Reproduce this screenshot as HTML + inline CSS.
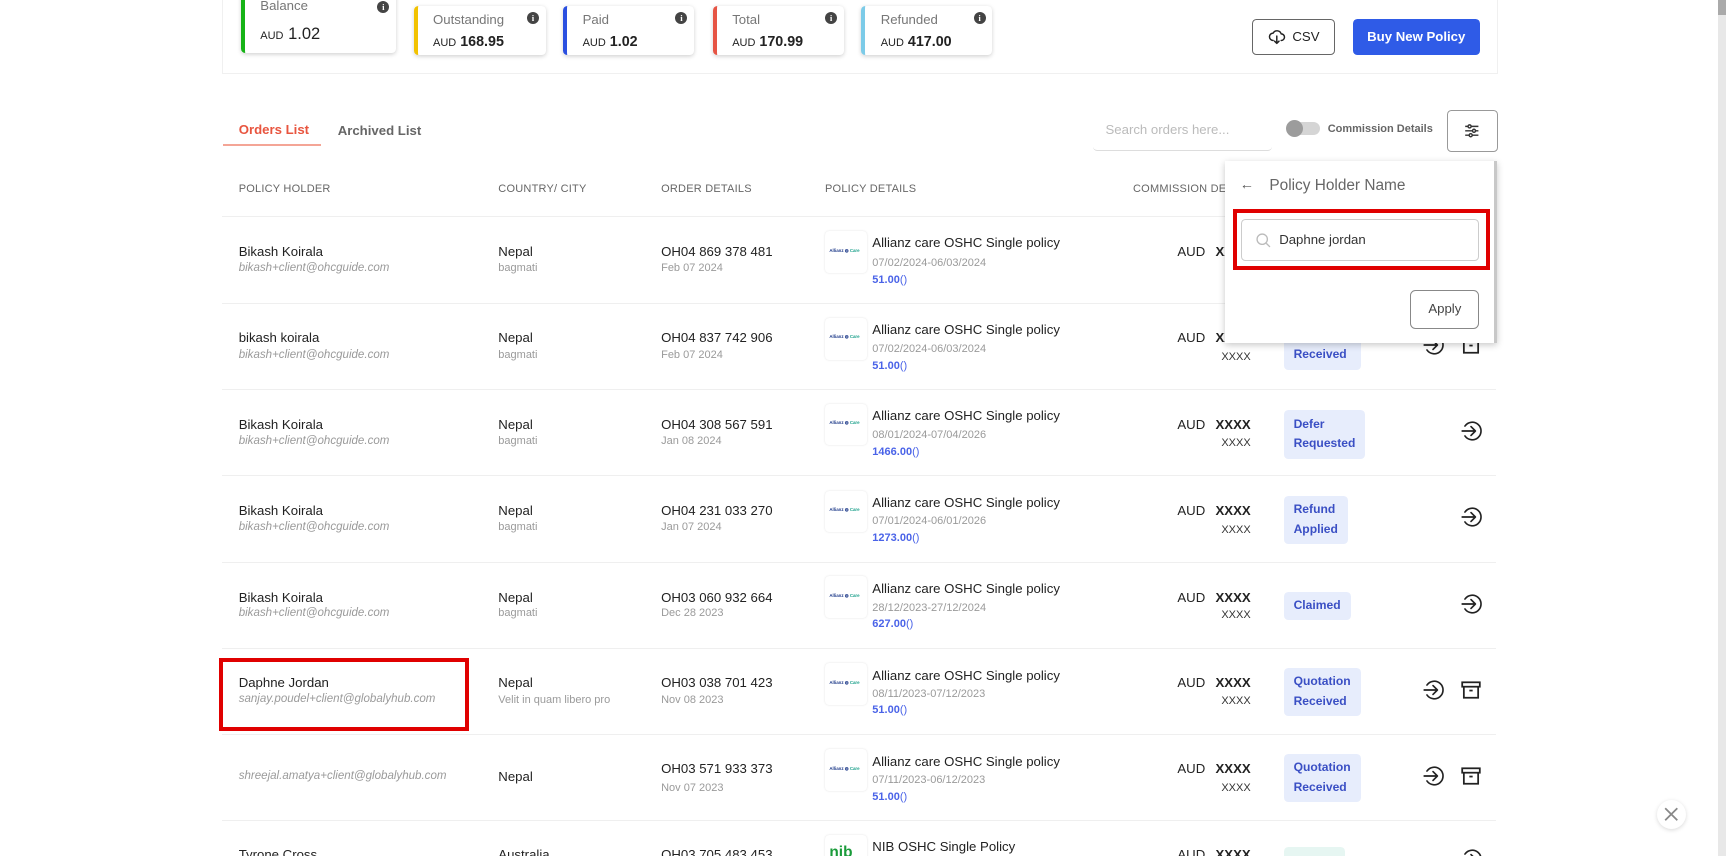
<!DOCTYPE html>
<html><head><meta charset="utf-8">
<style>
*{box-sizing:border-box;margin:0;padding:0}
html,body{width:1726px;height:856px;overflow:hidden;background:#fff}
#w{position:relative;width:1569px;height:779px;zoom:1.1;font-family:"Liberation Sans",Arial,sans-serif;color:#222}
.a{position:absolute;white-space:nowrap}
.card{position:absolute;background:#fff;border-radius:4px;box-shadow:0 1px 4px rgba(0,0,0,.18);border-left:4px solid}
.card .t{position:absolute;left:14px;font-size:12px;color:#777}
.card .v{position:absolute;left:14px;font-size:13px;font-weight:bold;color:#222}
.card .v small{font-size:10px;font-weight:normal}
.info{position:absolute;width:11px;height:11px;border-radius:50%;background:#444;color:#fff;font-size:8px;font-weight:bold;text-align:center;line-height:11px;font-family:"Liberation Serif",serif}
.hd{font-size:10px;color:#666;letter-spacing:.2px}
.sep{position:absolute;left:202px;width:1158px;height:1px;background:#efefef}
.nm{font-size:12px;color:#222}
.em{font-size:10.5px;color:#9a9a9a;font-style:italic}
.sub{font-size:10px;color:#9a9a9a}
.logo{position:absolute;width:38px;height:38px;border-radius:4px;box-shadow:0 0 2px rgba(0,0,0,.12);background:#fff}
.logo span{position:absolute;left:4px;top:15px;font-size:4px;color:#1e3a8a;font-weight:bold}
.logo span b{color:#1aa08a}
.pt{font-size:12px;color:#222}
.pr{font-size:10px;color:#4a63e8;font-weight:bold}
.pr i{font-style:normal;font-weight:normal}
.badge{position:absolute;background:#e7edfc;color:#3a4fc4;font-size:11px;font-weight:bold;border-radius:4px;padding:4px 9px;line-height:18px}
.aud{font-size:12px;color:#222;text-align:right;width:100px}
.aud b{margin-left:6px}
.x2{font-size:10px;color:#333;text-align:right;width:100px}
svg.ic{position:absolute}
</style></head><body><div id="w">

<div class="a" style="left:202px;top:-10px;width:1160px;height:77px;border:1px solid #f0f0f0;border-top:none"></div>
<div class="card" style="left:219px;top:-20px;width:141px;height:68px;border-color:#16b316"><div class="t" style="top:18px">Balance</div><div class="v" style="top:43px;font-size:15px;font-weight:normal"><small>AUD</small> 1.02</div><div class="info" style="right:6px;top:21px">i</div></div>
<div class="card" style="left:376px;top:5px;width:120px;height:45px;border-color:#f2c200"><div class="t" style="top:6px">Outstanding</div><div class="v" style="top:26px"><small>AUD</small> 168.95</div><div class="info" style="right:6px;top:6px">i</div></div>
<div class="card" style="left:512px;top:5px;width:119px;height:45px;border-color:#2a4fe0"><div class="t" style="top:6px">Paid</div><div class="v" style="top:26px"><small>AUD</small> 1.02</div><div class="info" style="right:6px;top:6px">i</div></div>
<div class="card" style="left:648px;top:5px;width:119px;height:45px;border-color:#e65444"><div class="t" style="top:6px">Total</div><div class="v" style="top:26px"><small>AUD</small> 170.99</div><div class="info" style="right:6px;top:6px">i</div></div>
<div class="card" style="left:783px;top:5px;width:119px;height:45px;border-color:#7ccbe8"><div class="t" style="top:6px">Refunded</div><div class="v" style="top:26px"><small>AUD</small> 417.00</div><div class="info" style="right:6px;top:6px">i</div></div>

<div class="a" style="left:1138px;top:17px;width:76px;height:33px;border:1px solid #666;border-radius:4px;font-size:12px;line-height:31px;padding-left:36px;color:#222">CSV</div>
<svg class="ic" style="left:1153px;top:25px" width="16" height="16" viewBox="0 0 24 24" fill="none" stroke="#222" stroke-width="2" stroke-linecap="round" stroke-linejoin="round"><path d="M7 17a5 5 0 0 1 0-10 6 6 0 0 1 11 1 4 4 0 0 1 0 9"/><path d="M12 11v10M9 18l3 3 3-3"/></svg>
<div class="a" style="left:1230px;top:17px;width:115px;height:33px;background:#2f5be7;border-radius:4px;color:#fff;font-size:12px;font-weight:bold;text-align:center;line-height:33px">Buy New Policy</div>

<div class="a" style="left:217px;top:111px;font-size:12px;font-weight:bold;color:#e8553f">Orders List</div>
<div class="a" style="left:203px;top:131px;width:89px;height:2px;background:#f4a596"></div>
<div class="a" style="left:307px;top:112px;font-size:12px;font-weight:bold;color:#666">Archived List</div>
<div class="a" style="left:994px;top:100px;width:162px;height:37px;border-bottom:1px solid #ddd;border-radius:0 0 4px 4px;font-size:12px;color:#bbb;padding:11px 11px">Search orders here...</div>
<div class="a" style="left:1170px;top:111px;width:30px;height:12px;border-radius:6px;background:#d5d5d5"></div>
<div class="a" style="left:1169px;top:109px;width:16px;height:16px;border-radius:50%;background:#9c9c9c"></div>
<div class="a" style="left:1207px;top:112px;font-size:10px;font-weight:bold;color:#666">Commission Details</div>
<div class="a" style="left:1315px;top:100px;width:47px;height:38px;border:1px solid #999;border-radius:4px"></div>
<svg class="ic" style="left:1330px;top:111px" width="16" height="16" viewBox="0 0 16 16" fill="none" stroke="#333" stroke-width="1.3"><path d="M2 4h12M2 8h12M2 12h12"/><circle cx="6" cy="4" r="1.4" fill="#fff"/><circle cx="10" cy="8" r="1.4" fill="#fff"/><circle cx="7" cy="12" r="1.4" fill="#fff"/></svg>

<div class="a hd" style="left:217px;top:166px">POLICY HOLDER</div>
<div class="a hd" style="left:453px;top:166px">COUNTRY/ CITY</div>
<div class="a hd" style="left:601px;top:166px">ORDER DETAILS</div>
<div class="a hd" style="left:750px;top:166px">POLICY DETAILS</div>
<div class="a hd" style="left:1030px;top:166px">COMMISSION DETAILS</div>

<div class="sep" style="top:196px"></div><div class="sep" style="top:275px"></div><div class="sep" style="top:354px"></div><div class="sep" style="top:432px"></div><div class="sep" style="top:511px"></div><div class="sep" style="top:589px"></div><div class="sep" style="top:667px"></div><div class="sep" style="top:745px"></div>

<div class="a nm" style="left:217px;top:222px">Bikash Koirala</div><div class="a em" style="left:217px;top:238px">bikash+client@ohcguide.com</div>
<div class="a nm" style="left:453px;top:222px">Nepal</div><div class="a sub" style="left:453px;top:238px">bagmati</div>
<div class="a nm" style="left:601px;top:222px">OH04 869 378 481</div><div class="a sub" style="left:601px;top:238px">Feb 07 2024</div>
<div class="logo" style="left:750px;top:210px"><span>Allianz ◍ <b>Care</b></span></div>
<div class="a pt" style="left:793px;top:214px">Allianz care OSHC Single policy</div><div class="a sub" style="left:793px;top:234px">07/02/2024-06/03/2024</div><div class="a pr" style="left:793px;top:249px">51.00<i>()</i></div>
<div class="a aud" style="left:1037px;top:222px">AUD <b>XXXX</b></div>

<div class="a nm" style="left:217px;top:300px">bikash koirala</div><div class="a em" style="left:217px;top:317px">bikash+client@ohcguide.com</div>
<div class="a nm" style="left:453px;top:300px">Nepal</div><div class="a sub" style="left:453px;top:317px">bagmati</div>
<div class="a nm" style="left:601px;top:300px">OH04 837 742 906</div><div class="a sub" style="left:601px;top:317px">Feb 07 2024</div>
<div class="logo" style="left:750px;top:289px"><span>Allianz ◍ <b>Care</b></span></div>
<div class="a pt" style="left:793px;top:293px">Allianz care OSHC Single policy</div><div class="a sub" style="left:793px;top:312px">07/02/2024-06/03/2024</div><div class="a pr" style="left:793px;top:327px">51.00<i>()</i></div>
<div class="a aud" style="left:1037px;top:300px">AUD <b>XXXX</b></div><div class="a x2" style="left:1037px;top:319px">XXXX</div>
<div class="badge" style="left:1167px;top:292px">Quotation<br>Received</div>

<div class="a nm" style="left:217px;top:379px">Bikash Koirala</div><div class="a em" style="left:217px;top:395px">bikash+client@ohcguide.com</div>
<div class="a nm" style="left:453px;top:379px">Nepal</div><div class="a sub" style="left:453px;top:395px">bagmati</div>
<div class="a nm" style="left:601px;top:379px">OH04 308 567 591</div><div class="a sub" style="left:601px;top:395px">Jan 08 2024</div>
<div class="logo" style="left:750px;top:367px"><span>Allianz ◍ <b>Care</b></span></div>
<div class="a pt" style="left:793px;top:371px">Allianz care OSHC Single policy</div><div class="a sub" style="left:793px;top:390px">08/01/2024-07/04/2026</div><div class="a pr" style="left:793px;top:405px">1466.00<i>()</i></div>
<div class="a aud" style="left:1037px;top:379px">AUD <b>XXXX</b></div><div class="a x2" style="left:1037px;top:397px">XXXX</div>
<div class="badge" style="left:1167px;top:373px">Defer<br>Requested</div>

<div class="a nm" style="left:217px;top:457px">Bikash Koirala</div><div class="a em" style="left:217px;top:474px">bikash+client@ohcguide.com</div>
<div class="a nm" style="left:453px;top:457px">Nepal</div><div class="a sub" style="left:453px;top:474px">bagmati</div>
<div class="a nm" style="left:601px;top:457px">OH04 231 033 270</div><div class="a sub" style="left:601px;top:474px">Jan 07 2024</div>
<div class="logo" style="left:750px;top:446px"><span>Allianz ◍ <b>Care</b></span></div>
<div class="a pt" style="left:793px;top:450px">Allianz care OSHC Single policy</div><div class="a sub" style="left:793px;top:468px">07/01/2024-06/01/2026</div><div class="a pr" style="left:793px;top:484px">1273.00<i>()</i></div>
<div class="a aud" style="left:1037px;top:457px">AUD <b>XXXX</b></div><div class="a x2" style="left:1037px;top:476px">XXXX</div>
<div class="badge" style="left:1167px;top:451px">Refund<br>Applied</div>

<div class="a nm" style="left:217px;top:536px">Bikash Koirala</div><div class="a em" style="left:217px;top:552px">bikash+client@ohcguide.com</div>
<div class="a nm" style="left:453px;top:536px">Nepal</div><div class="a sub" style="left:453px;top:552px">bagmati</div>
<div class="a nm" style="left:601px;top:536px">OH03 060 932 664</div><div class="a sub" style="left:601px;top:552px">Dec 28 2023</div>
<div class="logo" style="left:750px;top:524px"><span>Allianz ◍ <b>Care</b></span></div>
<div class="a pt" style="left:793px;top:528px">Allianz care OSHC Single policy</div><div class="a sub" style="left:793px;top:547px">28/12/2023-27/12/2024</div><div class="a pr" style="left:793px;top:562px">627.00<i>()</i></div>
<div class="a aud" style="left:1037px;top:536px">AUD <b>XXXX</b></div><div class="a x2" style="left:1037px;top:554px">XXXX</div>
<div class="badge" style="left:1167px;top:538px">Claimed</div>

<div class="a nm" style="left:217px;top:614px">Daphne Jordan</div><div class="a em" style="left:217px;top:630px">sanjay.poudel+client@globalyhub.com</div>
<div class="a nm" style="left:453px;top:614px">Nepal</div><div class="a sub" style="left:453px;top:631px">Velit in quam libero pro</div>
<div class="a nm" style="left:601px;top:614px">OH03 038 701 423</div><div class="a sub" style="left:601px;top:631px">Nov 08 2023</div>
<div class="logo" style="left:750px;top:603px"><span>Allianz ◍ <b>Care</b></span></div>
<div class="a pt" style="left:793px;top:607px">Allianz care OSHC Single policy</div><div class="a sub" style="left:793px;top:625px">08/11/2023-07/12/2023</div><div class="a pr" style="left:793px;top:640px">51.00<i>()</i></div>
<div class="a aud" style="left:1037px;top:614px">AUD <b>XXXX</b></div><div class="a x2" style="left:1037px;top:632px">XXXX</div>
<div class="badge" style="left:1167px;top:607px">Quotation<br>Received</div>
<div class="a" style="left:199px;top:598px;width:227px;height:67px;border:4px solid #e00000"></div>

<div class="a em" style="left:217px;top:700px">shreejal.amatya+client@globalyhub.com</div>
<div class="a nm" style="left:453px;top:699px">Nepal</div>
<div class="a nm" style="left:601px;top:692px">OH03 571 933 373</div><div class="a sub" style="left:601px;top:711px">Nov 07 2023</div>
<div class="logo" style="left:750px;top:681px"><span>Allianz ◍ <b>Care</b></span></div>
<div class="a pt" style="left:793px;top:685px">Allianz care OSHC Single policy</div><div class="a sub" style="left:793px;top:704px">07/11/2023-06/12/2023</div><div class="a pr" style="left:793px;top:719px">51.00<i>()</i></div>
<div class="a aud" style="left:1037px;top:692px">AUD <b>XXXX</b></div><div class="a x2" style="left:1037px;top:711px">XXXX</div>
<div class="badge" style="left:1167px;top:685px">Quotation<br>Received</div>

<div class="a nm" style="left:217px;top:770px">Tyrone Cross</div>
<div class="a nm" style="left:453px;top:770px">Australia</div>
<div class="a nm" style="left:601px;top:770px">OH03 705 483 453</div>
<div class="logo" style="left:750px;top:759px"><span style="top:8px;font-size:14px;color:#1a9b3a">nib</span></div>
<div class="a pt" style="left:793px;top:763px">NIB OSHC Single Policy</div>
<div class="a aud" style="left:1037px;top:770px">AUD <b>XXXX</b></div>
<div class="a" style="left:1167px;top:770px;width:56px;height:20px;background:#e6f6f2;border-radius:4px"></div>

<svg width="0" height="0" style="position:absolute"><defs>
<g id="ar" fill="none" stroke="#222" stroke-width="1.5" stroke-linecap="round" stroke-linejoin="round"><path d="M4.5 5.5A8 8 0 1 1 4.5 14.5"/><path d="M2 10h12M10 6l4 4-4 4"/></g>
<g id="bx" fill="none" stroke="#222" stroke-width="1.6"><rect x="2" y="3" width="16" height="4"/><path d="M3.5 7v10h13V7"/><path d="M8.5 10.5h3"/></g>
</defs></svg>
<svg class="ic" style="left:1327px;top:382px" width="20" height="20"><use href="#ar"/></svg>
<svg class="ic" style="left:1327px;top:460px" width="20" height="20"><use href="#ar"/></svg>
<svg class="ic" style="left:1327px;top:539px" width="20" height="20"><use href="#ar"/></svg>
<svg class="ic" style="left:1293px;top:617px" width="20" height="20"><use href="#ar"/></svg>
<svg class="ic" style="left:1327px;top:617px" width="20" height="20"><use href="#bx"/></svg>
<svg class="ic" style="left:1293px;top:695px" width="20" height="20"><use href="#ar"/></svg>
<svg class="ic" style="left:1327px;top:695px" width="20" height="20"><use href="#bx"/></svg>
<svg class="ic" style="left:1293px;top:304px" width="20" height="20"><use href="#ar"/></svg>
<svg class="ic" style="left:1327px;top:304px" width="20" height="20"><use href="#bx"/></svg>
<svg class="ic" style="left:1327px;top:771px" width="20" height="20"><use href="#ar"/></svg>

<div class="a" style="left:1114px;top:146px;width:247px;height:166px;background:#fff;box-shadow:0 2px 6px rgba(0,0,0,.22);border-right:3px solid #c8c8c8"></div>
<div class="a" style="left:1127px;top:161px;font-size:13px;color:#555">←</div>
<div class="a" style="left:1154px;top:161px;font-size:14px;color:#666">Policy Holder Name</div>
<div class="a" style="left:1128px;top:199px;width:217px;height:38px;border:1px solid #ccc;border-radius:4px;font-size:12px;color:#333;padding:11px 0 0 34px">Daphne jordan</div>
<svg class="ic" style="left:1141px;top:211px" width="15" height="15" viewBox="0 0 16 16" fill="none" stroke="#bbb" stroke-width="1.3"><circle cx="7" cy="7" r="5"/><path d="M11 11l3.5 3.5"/></svg>
<div class="a" style="left:1121px;top:190px;width:234px;height:55px;border:4px solid #e00000"></div>
<div class="a" style="left:1282px;top:264px;width:63px;height:35px;border:1px solid #888;border-radius:5px;font-size:12px;color:#444;text-align:center;line-height:33px">Apply</div>

<div class="a" style="left:1506px;top:727px;width:27px;height:27px;border-radius:50%;background:#fff;box-shadow:0 1px 4px rgba(0,0,0,.15)"></div>
<svg class="ic" style="left:1512px;top:733px" width="15" height="15"><path d="M2 2l11 11M13 2L2 13" stroke="#888" stroke-width="1.6"/></svg>
<div class="a" style="left:1562px;top:0;width:7px;height:779px;background:#e8e8e8"></div>
<div class="a" style="left:1562px;top:0;width:7px;height:14px;background:#aaa"></div>
</div></body></html>
